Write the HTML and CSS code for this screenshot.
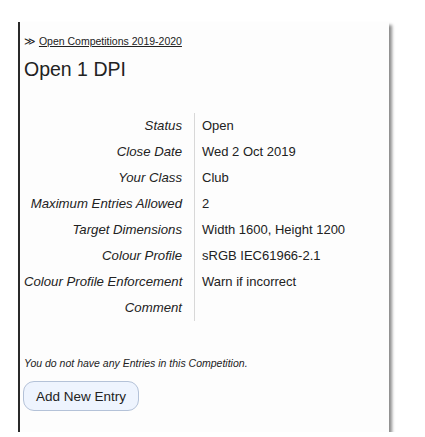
FILE: index.html
```html
<!DOCTYPE html>
<html lang="en">
<head>
    <meta charset="UTF-8">
    <title>Open 1 DPI</title>
    <link rel="stylesheet" href="styles.css">
</head>
<body>
    <div class="panel">
        <div class="crumb">&#8811; <a href="#">Open Competitions 2019-2020</a></div>
        <h1>Open 1 DPI</h1>

        <div class="details">
            <div class="label">Status</div><div class="value">Open</div>
            <div class="label">Close Date</div><div class="value">Wed 2 Oct 2019</div>
            <div class="label">Your Class</div><div class="value">Club</div>
            <div class="label">Maximum Entries Allowed</div><div class="value">2</div>
            <div class="label">Target Dimensions</div><div class="value">Width 1600, Height 1200</div>
            <div class="label">Colour Profile</div><div class="value">sRGB IEC61966-2.1</div>
            <div class="label">Colour Profile Enforcement</div><div class="value">Warn if incorrect</div>
            <div class="label">Comment</div><div class="value"></div>
        </div>

        <p class="note">You do not have any Entries in this Competition.</p>
        <button class="add">Add New Entry</button>
    </div>
</body>
</html>
```

FILE: styles.css
```css
body {
    margin: 0;
    background: #fff;
    font-family: "Liberation Sans", Arial, sans-serif;
    color: #222;
}

.panel {
    margin: 22px 0 0 18px;
    width: 371px;
    height: 410px;
    padding-left: 4px;
    box-sizing: border-box;
    background: #fdfdfd;
    border-left: 2px solid #2a2a2a;
    box-shadow: 3px 3px 3px rgba(0, 0, 0, 0.45);
}

.crumb {
    padding-top: 13px;
    font-size: 10.5px;
    line-height: 12px;
}

.crumb a {
    color: #222;
}

h1 {
    margin: 10px 0 0;
    font-size: 19.5px;
    font-weight: normal;
    line-height: 24px;
}

.details {
    display: grid;
    grid-template-columns: 171px auto;
    margin-top: 32px;
    font-size: 13px;
}

.label, .value {
    height: 26px;
    line-height: 26px;
    white-space: nowrap;
}

.label {
    font-style: italic;
    font-size: 13.2px;
    text-align: right;
    padding-right: 12px;
    border-right: 1px solid #d8d8d8;
}

.value {
    padding-left: 7px;
}

.note {
    margin: 36px 0 0;
    font-size: 10.5px;
    font-style: italic;
}

.add {
    margin-top: 12px;
    margin-left: -1px;
    height: 30px;
    width: 116px;
    padding: 0;
    font-family: "Liberation Sans", Arial, sans-serif;
    font-size: 13.5px;
    color: #222;
    background: #eef4fe;
    border: 1px solid #b4c2d8;
    border-radius: 11px;
}
```
